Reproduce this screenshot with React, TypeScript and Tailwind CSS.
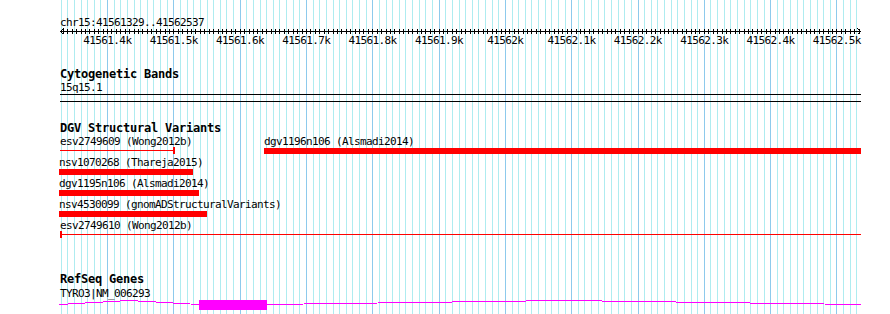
const START = 41561329;
const END = 41562537;
const LEFT = 60;
const WIDTH = 801;
const SCALE = WIDTH / (END - START);
const px = (bp: number) => LEFT + (bp - START) * SCALE;

const RED = "#ff0000";
const MAGENTA = "#ff00ff";

type Feature = {
  label: string;
  x: number;
  w: number;
  kind: "bar" | "line";
  cap?: number;
};

const dgvRows: Feature[][] = [
  [
    { label: "esv2749609 (Wong2012b)", x: 60, w: 113, kind: "line", cap: 173 },
    { label: "dgv1196n106 (Alsmadi2014)", x: 264, w: 597, kind: "bar" },
  ],
  [{ label: "nsv1070268 (Thareja2015)", x: 59, w: 134, kind: "bar" }],
  [{ label: "dgv1195n106 (Alsmadi2014)", x: 59, w: 140, kind: "bar" }],
  [{ label: "nsv4530099 (gnomADStructuralVariants)", x: 59, w: 148, kind: "bar" }],
  [{ label: "esv2749610 (Wong2012b)", x: 60, w: 801, kind: "line", cap: 60 }],
];

function Grid() {
  const lines = [];
  for (let bp = 41561330; bp <= END; bp += 10) {
    lines.push(
      <rect
        key={bp}
        x={Math.round(px(bp))}
        y={0}
        width={1}
        height={314}
        fill={bp % 100 === 0 ? "#8dcaec" : "#aeecf0"}
      />
    );
  }
  return (
    <svg className="absolute inset-0" width={890} height={314} shapeRendering="crispEdges">
      {lines}
    </svg>
  );
}

function Ruler() {
  const ticks = [];
  const step = 100 / 15;
  for (let bp = 41561400 - step * 10; bp <= END; bp += step) {
    const x = Math.round(px(bp)) - LEFT;
    if (x < 2 || x > WIDTH - 2) continue;
    ticks.push(<rect key={bp} x={x} y={1} width={1} height={5} fill="#000" />);
  }
  const labels = [];
  for (let bp = 41561400; bp <= END; bp += 100) {
    const k = Math.round((bp / 1000) * 10) / 10;
    labels.push({ x: px(bp) - LEFT, text: `${k}k` });
  }
  return (
    <div className="flex flex-col">
      <svg width={803} height={6} className="overflow-visible" shapeRendering="crispEdges">
        <rect x={0} y={3} width={WIDTH} height={1} fill="#000" />
        {ticks}
        <path d="M0.5 3.5 L3.5 0.5 M0.5 3.5 L3.5 6.5" stroke="#000" fill="none" />
        <path d="M800.5 3.5 L797.5 0.5 M800.5 3.5 L797.5 6.5" stroke="#000" fill="none" />
      </svg>
      <div className="relative h-[13px]">
        {labels.map((l) => (
          <span
            key={l.text}
            className="absolute top-0 -translate-x-1/2 whitespace-nowrap text-[11px] leading-[13px] tracking-[-0.62px]"
            style={{ left: l.x + 0.3 }}
          >
            {l.text}
          </span>
        ))}
      </div>
    </div>
  );
}

function Title({ children }: { children: string }) {
  return (
    <div className="h-[13px] whitespace-nowrap text-[12px] font-bold leading-[13px] tracking-[-0.22px]">
      {children}
    </div>
  );
}

function DgvRow({ features }: { features: Feature[] }) {
  return (
    <div className="relative h-[21px]">
      {features.map((f) => (
        <div key={f.label}>
          <span
            className="absolute top-0 whitespace-nowrap text-[11px] leading-[13px] tracking-[-0.62px]"
            style={{ left: f.x - LEFT }}
          >
            {f.label}
          </span>
          {f.kind === "bar" ? (
            <div className="absolute top-[13px] h-[6px]" style={{ left: f.x - LEFT, width: f.w, backgroundColor: RED }} />
          ) : (
            <>
              <div className="absolute top-[15px] h-px" style={{ left: f.x - LEFT, width: f.w, backgroundColor: RED }} />
              <div
                className="absolute top-[12px] h-[7px] w-[2px]"
                style={{ left: (f.cap ?? f.x) - LEFT, backgroundColor: RED }}
              />
            </>
          )}
        </div>
      ))}
    </div>
  );
}

function Gene() {
  return (
    <svg width={WIDTH} height={10} className="overflow-visible" shapeRendering="crispEdges">
      <polyline points="-0.75,4.5 69.5,0.5 139,4.5" stroke={MAGENTA} fill="none" />
      <rect x={139} y={0} width={68} height={10} fill={MAGENTA} />
      <polyline points="207,4.5 504,0.5 801,4.5" stroke={MAGENTA} fill="none" />
    </svg>
  );
}

export default function App() {
  return (
    <div className="relative h-[314px] w-[890px] overflow-hidden bg-white font-['DejaVu_Sans_Mono',monospace] text-black">
      <Grid />
      <div className="relative flex w-[861px] flex-col pl-[60px] pt-[16px]">
        {/* ruler */}
        <div className="h-[12px] whitespace-nowrap text-[11px] leading-[13px] tracking-[-0.62px]">
          chr15:41561329..41562537
        </div>
        <Ruler />

        {/* cytoband */}
        <div className="mt-[21px]">
          <Title>Cytogenetic Bands</Title>
        </div>
        <div className="h-[12px] text-[11px] leading-[13px] tracking-[-0.62px]">15q15.1</div>
        <div className="mt-px h-[8px] border-y border-black" />

        {/* dgv */}
        <div className="mt-[20px]">
          <Title>DGV Structural Variants</Title>
        </div>
        {dgvRows.map((row, i) => (
          <DgvRow key={i} features={row} />
        ))}

        {/* refseq */}
        <div className="mt-[33px]">
          <Title>RefSeq Genes</Title>
        </div>
        <div className="relative z-10 mt-px h-[13px] whitespace-nowrap text-[11px] leading-[13px] tracking-[-0.62px]">
          TYRO3|NM_006293
        </div>
        <Gene />
      </div>
    </div>
  );
}
